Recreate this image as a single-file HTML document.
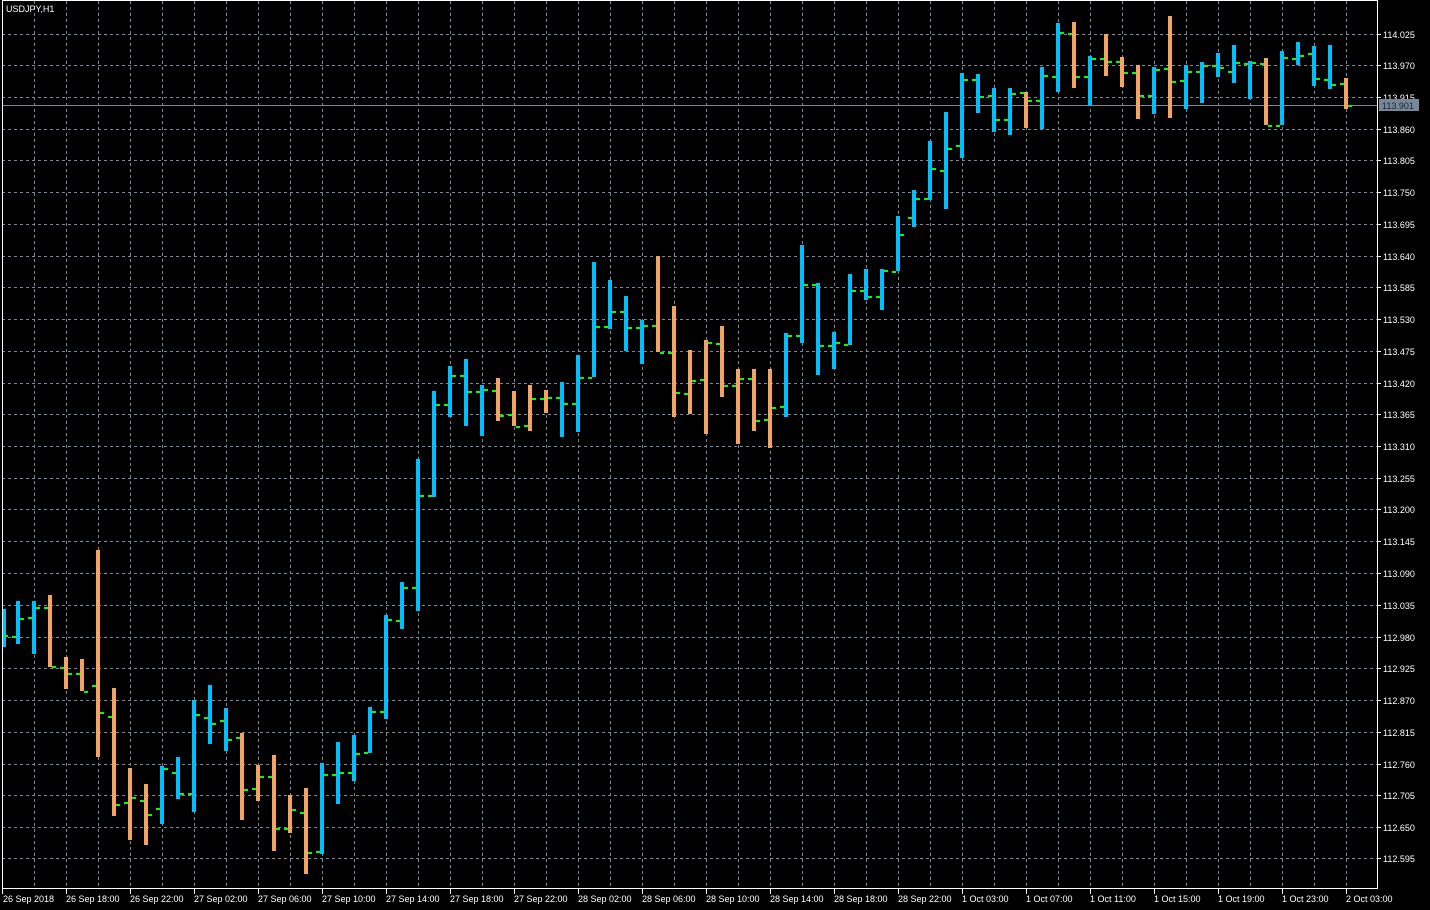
<!DOCTYPE html>
<html><head><meta charset="utf-8"><style>
html,body{margin:0;padding:0;background:#000;width:1430px;height:910px;overflow:hidden}
svg{display:block}
text{font-family:"Liberation Sans",sans-serif;font-size:9px;fill:#fff}
</style></head><body>
<svg width="1430" height="910" viewBox="0 0 1430 910" xmlns="http://www.w3.org/2000/svg" shape-rendering="crispEdges">
<rect width="1430" height="910" fill="#000"/>
<g stroke="#778899" stroke-width="1" stroke-dasharray="3,3">
<path d="M2 34.5H1377M2 65.5H1377M2 97.5H1377M2 129.5H1377M2 160.5H1377M2 192.5H1377M2 224.5H1377M2 256.5H1377M2 287.5H1377M2 319.5H1377M2 351.5H1377M2 383.5H1377M2 414.5H1377M2 446.5H1377M2 478.5H1377M2 509.5H1377M2 541.5H1377M2 573.5H1377M2 605.5H1377M2 637.5H1377M2 668.5H1377M2 700.5H1377M2 732.5H1377M2 764.5H1377M2 795.5H1377M2 827.5H1377M2 858.5H1377"/>
<path d="M34.5 1V888M66.5 1V888M98.5 1V888M130.5 1V888M162.5 1V888M194.5 1V888M226.5 1V888M258.5 1V888M290.5 1V888M322.5 1V888M354.5 1V888M386.5 1V888M418.5 1V888M450.5 1V888M482.5 1V888M514.5 1V888M546.5 1V888M578.5 1V888M610.5 1V888M642.5 1V888M674.5 1V888M706.5 1V888M738.5 1V888M770.5 1V888M802.5 1V888M834.5 1V888M866.5 1V888M898.5 1V888M930.5 1V888M962.5 1V888M994.5 1V888M1026.5 1V888M1058.5 1V888M1090.5 1V888M1122.5 1V888M1154.5 1V888M1186.5 1V888M1218.5 1V888M1250.5 1V888M1282.5 1V888M1314.5 1V888M1346.5 1V888"/>
</g>
<path d="M2 105.5H1377" stroke="#778899" stroke-width="1"/>
<!-- blue bars -->
<g stroke="#00bfff" stroke-width="4">
<path d="M4 609V647"/>
<path d="M18 601V644M34 601V654M162 766V824M178 757V799M194 700V812M210 685V744M226 708V751M322 763V854M338 742V804M354 735V781M370 707V753M386 615V719M402 582V629M418 459V611M434 391V497M450 366V417M466 359V426M482 385V436M562 382V437M578 355V432M594 262V377M610 280V329M626 296V351M642 320V364M786 333V417M802 245V343M818 283V375M834 332V369M850 274V345M866 269V300M882 269V310M898 216V271M914 190V227M930 141V200M946 112V209M962 73V158M978 74V113M994 88V132M1010 88V135M1042 67V129M1058 23V92M1090 56V106M1154 67V114M1186 65V109M1202 62V103M1218 53V77M1234 45V83M1250 61V99M1282 51V125M1298 42V65M1314 46V86M1330 45V89"/>
</g>
<!-- orange bars -->
<g stroke="#f4a460" stroke-width="4">
<path d="M50 595V667M66 657V689M82 659V691M98 550V757M114 688V816M130 768V840M146 784V845M242 733V820M258 765V801M274 755V851M290 795V833M306 788V874M498 378V421M514 391V426M530 385V431M546 390V413M658 256V352M674 306V417M690 350V414M706 340V434M722 326V397M738 369V444M754 369V431M770 369V448M1026 92V128M1074 22V88M1106 34V76M1122 57V87M1138 65V119M1170 16V118M1266 58V125M1346 78V109"/>
</g>
<!-- ticks -->
<g stroke="#00ff00" stroke-width="2" transform="translate(0,1)">
<path d="M4 635h4M12 636h4M20 618h4M28 617h4M36 607h4M44 607h4M52 666h4M60 667h4M68 673h4M76 673h4M84 691h4M92 685h4M100 712h4M108 716h4M116 804h4M124 802h4M132 797h4M140 800h4M148 814h4M156 808h4M164 768h4M172 772h4M180 793h4M188 793h4M196 714h4M204 717h4M212 723h4M220 720h4M228 739h4M236 737h4M244 789h4M252 788h4M260 776h4M268 776h4M276 828h4M284 828h4M292 809h4M300 812h4M308 852h4M316 851h4M324 774h4M332 774h4M340 772h4M348 772h4M356 753h4M364 752h4M372 711h4M380 711h4M388 619h4M396 620h4M404 587h4M412 587h4M420 495h4M428 495h4M436 404h4M444 404h4M452 375h4M460 375h4M468 391h4M476 391h4M484 389h4M492 390h4M500 415h4M508 414h4M516 426h4M524 425h4M532 398h4M540 398h4M548 397h4M556 397h4M564 403h4M572 403h4M580 377h4M588 377h4M596 326h4M604 326h4M612 311h4M620 311h4M628 327h4M636 327h4M644 325h4M652 325h4M660 352h4M668 352h4M676 392h4M684 393h4M692 380h4M700 379h4M708 342h4M716 343h4M724 385h4M732 385h4M740 378h4M748 378h4M756 420h4M764 419h4M772 407h4M780 406h4M788 335h4M796 335h4M804 284h4M812 284h4M820 345h4M828 345h4M836 342h4M844 344h4M852 290h4M860 290h4M868 296h4M876 296h4M884 270h4M892 271h4M900 234h4M908 217h4M916 198h4M924 198h4M932 168h4M940 170h4M948 148h4M956 145h4M964 79h4M972 79h4M980 96h4M988 95h4M996 119h4M1004 119h4M1012 93h4M1020 92h4M1028 100h4M1036 100h4M1044 75h4M1052 76h4M1060 32h4M1068 33h4M1076 76h4M1084 76h4M1092 58h4M1100 58h4M1108 61h4M1116 61h4M1124 72h4M1132 72h4M1140 95h4M1148 95h4M1156 69h4M1164 68h4M1172 81h4M1180 80h4M1188 71h4M1196 71h4M1204 65h4M1212 65h4M1220 67h4M1228 71h4M1236 62h4M1244 63h4M1252 62h4M1260 63h4M1268 125h4M1276 125h4M1284 57h4M1292 58h4M1300 55h4M1308 53h4M1316 78h4M1324 79h4M1332 84h4M1340 83h4M1348 105h4"/>
</g>
<!-- frame -->
<g stroke="#fff" stroke-width="1" fill="none">
<path d="M2.5 0.5H1377.5V888.5H2.5Z"/>
<path d="M1377 34.5h4M1377 65.5h4M1377 97.5h4M1377 129.5h4M1377 160.5h4M1377 192.5h4M1377 224.5h4M1377 256.5h4M1377 287.5h4M1377 319.5h4M1377 351.5h4M1377 383.5h4M1377 414.5h4M1377 446.5h4M1377 478.5h4M1377 509.5h4M1377 541.5h4M1377 573.5h4M1377 605.5h4M1377 637.5h4M1377 668.5h4M1377 700.5h4M1377 732.5h4M1377 764.5h4M1377 795.5h4M1377 827.5h4M1377 858.5h4"/>
<path d="M2.5 888v6M66.5 888v6M130.5 888v6M194.5 888v6M258.5 888v6M322.5 888v6M386.5 888v6M450.5 888v6M514.5 888v6M578.5 888v6M642.5 888v6M706.5 888v6M770.5 888v6M834.5 888v6M898.5 888v6M962.5 888v6M1026.5 888v6M1090.5 888v6M1154.5 888v6M1218.5 888v6M1282.5 888v6M1346.5 888v6"/>
</g>
<text x="6" y="12">USDJPY,H1</text>
<g>
<text x="1383" y="38">114.025</text>
<text x="1383" y="69">113.970</text>
<text x="1383" y="101">113.915</text>
<text x="1383" y="133">113.860</text>
<text x="1383" y="164">113.805</text>
<text x="1383" y="196">113.750</text>
<text x="1383" y="228">113.695</text>
<text x="1383" y="260">113.640</text>
<text x="1383" y="291">113.585</text>
<text x="1383" y="323">113.530</text>
<text x="1383" y="355">113.475</text>
<text x="1383" y="387">113.420</text>
<text x="1383" y="418">113.365</text>
<text x="1383" y="450">113.310</text>
<text x="1383" y="482">113.255</text>
<text x="1383" y="513">113.200</text>
<text x="1383" y="545">113.145</text>
<text x="1383" y="577">113.090</text>
<text x="1383" y="609">113.035</text>
<text x="1383" y="641">112.980</text>
<text x="1383" y="672">112.925</text>
<text x="1383" y="704">112.870</text>
<text x="1383" y="736">112.815</text>
<text x="1383" y="768">112.760</text>
<text x="1383" y="799">112.705</text>
<text x="1383" y="831">112.650</text>
<text x="1383" y="862">112.595</text>
</g>
<rect x="1379" y="99" width="40" height="12" fill="#778899"/>
<text x="1382" y="109" style="fill:#1a2430">113.901</text>
<g>
<text x="3" y="902">26 Sep 2018</text>
<text x="66" y="902">26 Sep 18:00</text>
<text x="130" y="902">26 Sep 22:00</text>
<text x="194" y="902">27 Sep 02:00</text>
<text x="258" y="902">27 Sep 06:00</text>
<text x="322" y="902">27 Sep 10:00</text>
<text x="386" y="902">27 Sep 14:00</text>
<text x="450" y="902">27 Sep 18:00</text>
<text x="514" y="902">27 Sep 22:00</text>
<text x="578" y="902">28 Sep 02:00</text>
<text x="642" y="902">28 Sep 06:00</text>
<text x="706" y="902">28 Sep 10:00</text>
<text x="770" y="902">28 Sep 14:00</text>
<text x="834" y="902">28 Sep 18:00</text>
<text x="898" y="902">28 Sep 22:00</text>
<text x="962" y="902">1 Oct 03:00</text>
<text x="1026" y="902">1 Oct 07:00</text>
<text x="1090" y="902">1 Oct 11:00</text>
<text x="1154" y="902">1 Oct 15:00</text>
<text x="1218" y="902">1 Oct 19:00</text>
<text x="1282" y="902">1 Oct 23:00</text>
<text x="1346" y="902">2 Oct 03:00</text>
</g>
</svg>
</body></html>
